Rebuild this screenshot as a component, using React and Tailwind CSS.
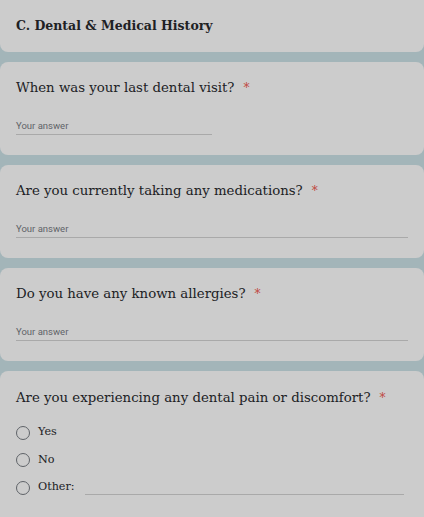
import React from "react";

const serif = { fontFamily: '"DejaVu Serif", "Liberation Serif", serif' };

function Question({ text, half }) {
  return (
    <div className="bg-[#cccccc] rounded-lg px-4 h-[93px] flex flex-col">
      <div className="pt-[16px] flex items-start text-[13.3px] leading-[20px] text-[#202124]" style={serif}>
        <span>{text}</span>
        <span className="ml-[9px] text-[#c0463d] text-[12px]">*</span>
      </div>
      <div className={`mt-[22px] ${half ? "w-[196px]" : "w-full"} border-b border-[#a9a9a9] pb-[2px]`}>
        <span className="text-[9.5px] leading-[12px] text-[#5f6368] block" style={{ fontFamily: "Roboto, sans-serif" }}>Your answer</span>
      </div>
    </div>
  );
}

function Radio({ label, other }) {
  return (
    <div className="flex items-center h-[27.5px]">
      <span className="w-[14px] h-[14px] rounded-full border-[1.5px] border-[#5f6368] mr-[8px] shrink-0" />
      <span className="text-[11.2px] text-[#202124]" style={serif}>{label}</span>
      {other && <span className="ml-[10px] flex-1 border-b border-[#a9a9a9] mt-[14px]" />}
    </div>
  );
}

export default function App() {
  return (
    <div className="w-[424px] h-[517px] overflow-hidden bg-[#a3b5b9] flex flex-col gap-[10px]">
      <div className="bg-[#cccccc] rounded-b-lg h-[52px] px-4 flex items-center shrink-0">
        <span className="text-[12.5px] font-bold text-[#202124]" style={serif}>C. Dental &amp; Medical History</span>
      </div>
      <Question text="When was your last dental visit?" half />
      <Question text="Are you currently taking any medications?" />
      <Question text="Do you have any known allergies?" />
      <div className="bg-[#cccccc] rounded-t-lg px-4 flex-1 flex flex-col">
        <div className="pt-[17px] flex items-start text-[13.3px] leading-[20px] text-[#202124]" style={serif}>
          <span>Are you experiencing any dental pain or discomfort?</span>
          <span className="ml-[9px] text-[#c0463d] text-[12px]">*</span>
        </div>
        <div className="mt-[11px] flex flex-col pr-[4px]">
          <Radio label="Yes" />
          <Radio label="No" />
          <Radio label="Other:" other />
        </div>
      </div>
    </div>
  );
}
